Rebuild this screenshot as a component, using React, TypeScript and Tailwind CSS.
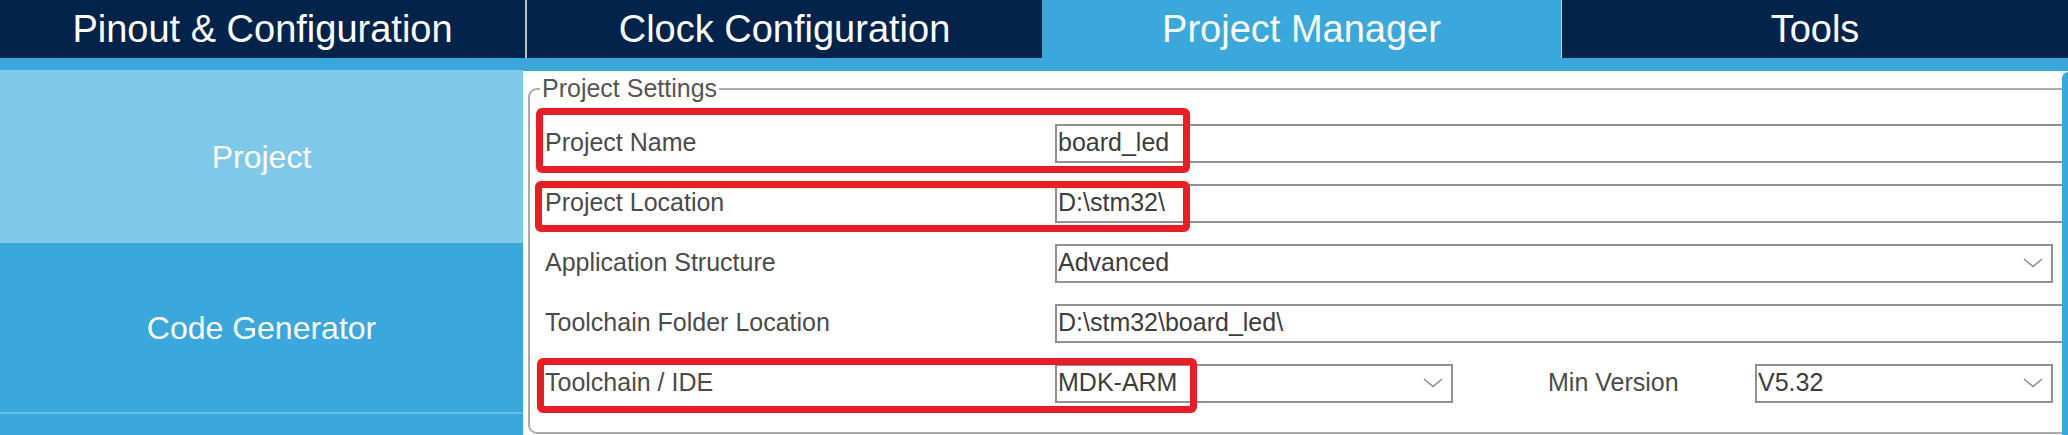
import React from "react";

const tabs = [
  { label: "Pinout & Configuration", cls: "w-[525px]" },
  { label: "Clock Configuration", cls: "w-[517px] border-l-2 border-[#b8c2ce]" },
  { label: "Project Manager", cls: "w-[519px] bg-[#3aa8dc]" },
  { label: "Tools", cls: "flex-1 border-l border-[#c9d2dc]" },
];

function Chevron() {
  return (
    <svg width="20" height="10" viewBox="0 0 20 10" className="shrink-0">
      <polyline points="1,1 10,8.5 19,1" fill="none" stroke="#8c8c8c" strokeWidth="1.6" />
    </svg>
  );
}

function TextBox({ value, cls = "flex-1" }: { value: string; cls?: string }) {
  return (
    <div className={`${cls} h-[39px] border-2 border-[#919191] flex items-center pl-[1px] text-[#3d3d3d] whitespace-nowrap`}>
      {value}
    </div>
  );
}

function Select({ value, cls }: { value: string; cls: string }) {
  return (
    <div className={`${cls} h-[39px] border-2 border-[#919191] flex items-center justify-between pl-[1px] pr-[8px] text-[#3d3d3d] shrink-0`}>
      <span>{value}</span>
      <Chevron />
    </div>
  );
}

// red annotation frame drawn over a row
function Mark({ cls }: { cls: string }) {
  return <div className={`absolute ${cls} border-[7px] border-[#ec1c24] rounded-[6px] pointer-events-none`} />;
}

function Row({ label, children, mark }: { label: string; children: React.ReactNode; mark?: string }) {
  return (
    <div className="relative h-[60px] flex items-center">
      <div className="w-[515px] pl-[5px] text-[#4b4b4b] shrink-0">{label}</div>
      {children}
      {mark && <Mark cls={mark} />}
    </div>
  );
}

export default function App() {
  return (
    <div className="w-[2068px] h-[435px] overflow-hidden flex flex-col font-['Liberation_Sans',Arial,sans-serif]">
      <div className="h-[58px] flex bg-[#03234b] shrink-0">
        {tabs.map((t) => (
          <div key={t.label} className={`${t.cls} flex items-center justify-center text-white text-[38px] leading-none`}>
            {t.label}
          </div>
        ))}
      </div>
      <div className="h-[12px] bg-[#3aa8dc] shrink-0" />

      <div className="flex-1 flex bg-[#3aa8dc] min-h-0">
        <div className="w-[523px] shrink-0 flex flex-col text-white text-[32px]">
          <div className="h-[173px] bg-[#80c8ea] flex items-center justify-center">Project</div>
          <div className="h-[169px] flex items-center justify-center">Code Generator</div>
          <div className="h-[2px] bg-[#66bde6]" />
          <div className="flex-1" />
        </div>

        <div className="flex-1 min-w-0 flex pt-px">
          <div className="flex-1 min-w-0 flex bg-white">
            <div className="flex-1 min-w-0 overflow-hidden pl-[5px] pt-[3px]">
              <fieldset className="w-[1560px] h-[360px] border-2 border-[#ababab] rounded-[9px] pl-[10px] text-[25px]">
                <legend className="px-[2px] text-[#555555] leading-[29px]">Project Settings</legend>
                <div className="mt-[10px] flex flex-col">
                  <Row label="Project Name" mark="-left-[4px] -top-[5px] w-[654px] h-[65px]">
                    <TextBox value="board_led" />
                  </Row>
                  <Row label="Project Location" mark="-left-[5px] top-[8px] w-[655px] h-[51px]">
                    <TextBox value="D:\stm32\" />
                  </Row>
                  <Row label="Application Structure">
                    <Select value="Advanced" cls="w-[998px]" />
                  </Row>
                  <Row label="Toolchain Folder Location">
                    <TextBox value="D:\stm32\board_led\" />
                  </Row>
                  <Row label="Toolchain / IDE" mark="-left-[3px] top-[5px] w-[660px] h-[55px]">
                    <Select value="MDK-ARM" cls="w-[398px]" />
                    <div className="w-[302px] pl-[95px] text-[#4b4b4b] shrink-0">Min Version</div>
                    <Select value="V5.32" cls="w-[298px]" />
                  </Row>
                </div>
              </fieldset>
            </div>
            <div className="w-[6px] shrink-0 mt-[1px] bg-[#3aa8dc] rounded-tl-[6px]" />
          </div>
        </div>
      </div>
    </div>
  );
}
